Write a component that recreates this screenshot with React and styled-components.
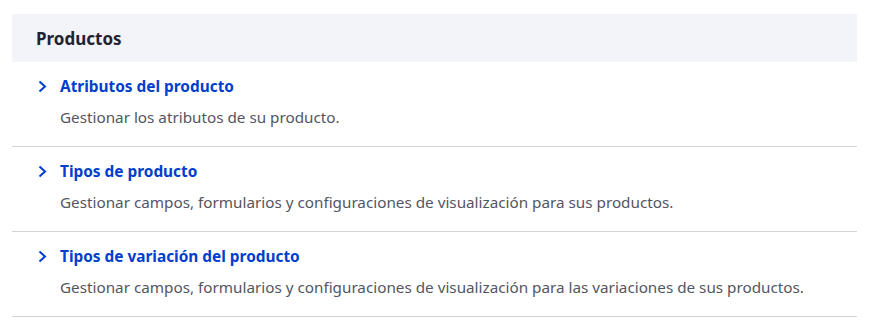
import React from "react";
import styled, { createGlobalStyle } from "styled-components";

const Global = createGlobalStyle`
  html, body { margin: 0; padding: 0; background: #fff; }
  body { font-family: "Noto Sans", "Open Sans", sans-serif; }
`;

const Panel = styled.section`
  margin: 14px 20px 0 12px;
`;

const Header = styled.h2`
  margin: 0;
  height: 48px;
  display: flex;
  align-items: center;
  padding: 0 24px;
  background: #f3f4f9;
  color: #222330;
  font-size: 17px;
  font-weight: 700;
`;

const List = styled.ul`
  list-style: none;
  margin: 0;
  padding: 0;
`;

const Item = styled.li`
  height: 85px;
  box-sizing: border-box;
  border-bottom: 1px solid #d3d4d9;
  padding: 12px 24px 0 26px;
`;

const LinkRow = styled.a`
  display: flex;
  align-items: center;
  gap: 13px;
  color: #003ecc;
  font-size: 15.4px;
  font-weight: 700;
  text-decoration: none;
  height: 24px;
`;

const Desc = styled.div`
  margin: 7px 0 0 22px;
  color: #545560;
  font-size: 15.25px;
  line-height: 24px;
`;

const Chevron = () => (
  <svg width="9" height="13" viewBox="0 0 9 13" fill="none">
    <path d="M1.5 1.5 L7 6.5 L1.5 11.5" stroke="#003ecc" strokeWidth="2" />
  </svg>
);

const items = [
  ["Atributos del producto", "Gestionar los atributos de su producto."],
  ["Tipos de producto", "Gestionar campos, formularios y configuraciones de visualización para sus productos."],
  ["Tipos de variación del producto", "Gestionar campos, formularios y configuraciones de visualización para las variaciones de sus productos."],
];

export default function App() {
  return (
    <>
      <Global />
      <Panel>
        <Header>Productos</Header>
        <List>
          {items.map(([t, d]) => (
            <Item key={t}>
              <LinkRow href="#">
                <Chevron />
                {t}
              </LinkRow>
              <Desc>{d}</Desc>
            </Item>
          ))}
        </List>
      </Panel>
    </>
  );
}
